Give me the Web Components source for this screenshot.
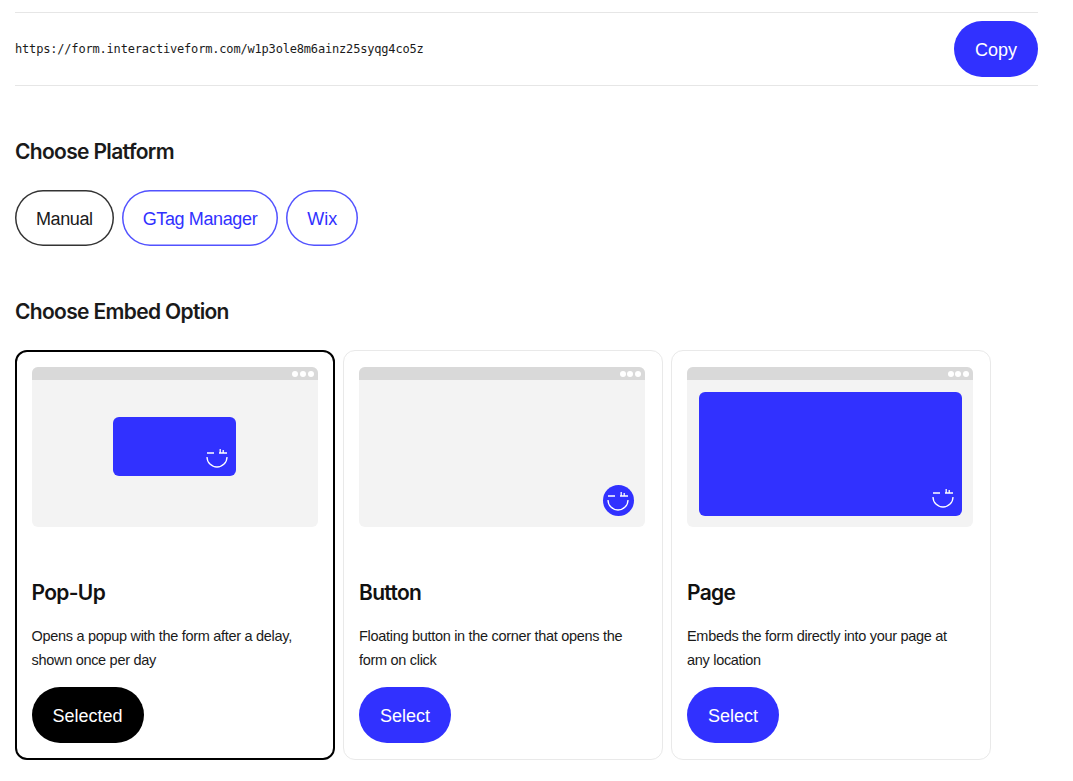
<!DOCTYPE html>
<html>
<head>
<meta charset="utf-8">
<title>Embed</title>
<style>
  body {
    margin: 0;
    background: #fff;
    font-family: "Liberation Sans", Arial, sans-serif;
    color: #1a1a1a;
  }
</style>
</head>
<body>
<embed-page></embed-page>

<script>
const pillTemplate = document.createElement('template');
pillTemplate.innerHTML = `
  <style>
    :host {
      display: inline-flex;
      align-items: center;
      justify-content: center;
      box-sizing: border-box;
      height: 56px;
      padding: 2px 21px 0;
      border-radius: 28px;
      font-size: 18px;
      white-space: nowrap;
      background: #3131ff;
      color: #fff;
    }
    :host([kind="black"]) { background: #000; }
    :host([kind="outline"]) {
      background: #fff;
      color: #3131ff;
      box-shadow: inset 0 0 0 1.5px #5252ff;
    }
    :host([kind="outline-dark"]) {
      background: #fff;
      color: #1a1a1a;
      box-shadow: inset 0 0 0 1.5px #333;
    }
  </style>
  <slot></slot>
`;

class EmbedPill extends HTMLElement {
  constructor() {
    super();
    this.attachShadow({ mode: 'open' });
    this.shadowRoot.appendChild(pillTemplate.content.cloneNode(true));
  }
}

const smileTemplate = document.createElement('template');
smileTemplate.innerHTML = `
  <style>
    :host { display: block; width: 22px; height: 20px; }
    svg { display: block; }
  </style>
  <svg width="22" height="20" viewBox="0 0 22 20" fill="none" stroke="#fff" stroke-width="1.3">
    <path d="M1 5H8"/>
    <path d="M13 5H21M14.2 1V5M17.2 2V5"/>
    <path d="M1 9A10 10 0 0 0 21 9"/>
  </svg>
`;

class EmbedSmile extends HTMLElement {
  constructor() {
    super();
    this.attachShadow({ mode: 'open' });
    this.shadowRoot.appendChild(smileTemplate.content.cloneNode(true));
  }
}

const previewTemplate = document.createElement('template');
previewTemplate.innerHTML = `
  <style>
    :host {
      display: block;
      position: relative;
      width: 286px;
      height: 160px;
      border-radius: 6px;
      overflow: hidden;
      background: #f3f3f3;
    }
    .bar {
      position: absolute;
      left: 0;
      right: 0;
      top: 0;
      height: 13px;
      background: #d9d9d9;
      display: flex;
      justify-content: flex-end;
      align-items: center;
      gap: 1.6px;
      padding-right: 4px;
    }
    .bar i {
      width: 6px;
      height: 6px;
      border-radius: 50%;
      background: #fff;
    }
    .stage {
      box-sizing: border-box;
      height: 100%;
      display: flex;
    }
    .blue {
      background: #3131ff;
      display: flex;
      align-items: flex-end;
      justify-content: flex-end;
      box-sizing: border-box;
    }
    :host([mode="popup"]) .stage {
      align-items: center;
      justify-content: center;
      padding-bottom: 1px;
    }
    :host([mode="popup"]) .blue {
      width: 123px;
      height: 59px;
      border-radius: 6px;
      padding: 0 8px 8px 0;
    }
    :host([mode="button"]) .stage {
      align-items: flex-end;
      justify-content: flex-end;
      padding: 0 11px 11px 0;
    }
    :host([mode="button"]) .blue {
      width: 31px;
      height: 31px;
      border-radius: 50%;
      padding: 0 5px 5px 0;
    }
    :host([mode="page"]) .stage { padding: 25px 11px 11px 12px; }
    :host([mode="page"]) .blue {
      flex: 1;
      border-radius: 6px;
      padding: 0 8px 8px 0;
    }
  </style>
  <div class="stage">
    <div class="blue"><embed-smile></embed-smile></div>
  </div>
  <div class="bar"><i></i><i></i><i></i></div>
`;

class EmbedPreview extends HTMLElement {
  constructor() {
    super();
    this.attachShadow({ mode: 'open' });
    this.shadowRoot.appendChild(previewTemplate.content.cloneNode(true));
  }
}

const cardTemplate = document.createElement('template');
cardTemplate.innerHTML = `
  <style>
    :host {
      display: block;
      box-sizing: border-box;
      width: 320px;
      height: 410px;
      padding: 16px 15px 0;
      border: 1px solid #e9e9e9;
      border-radius: 12px;
      background: #fff;
    }
    :host([selected]) {
      padding: 15px 14px 0 14.5px;
      border: 2px solid #000;
    }
    h3 {
      margin: 50px 0 0;
      font-family: Inter, "Liberation Sans", sans-serif;
      font-size: 21px;
      line-height: 32px;
      font-weight: 600;
      letter-spacing: -0.67px;
      color: #111;
    }
    p {
      margin: 15px 0 0;
      max-width: 280px;
      height: 48px;
      font-size: 14.5px;
      line-height: 24px;
      letter-spacing: -0.3px;
      color: #1a1a1a;
    }
    .action { margin-top: 15px; }
  </style>
  <slot name="preview"></slot>
  <h3><slot name="title"></slot></h3>
  <p><slot name="text"></slot></p>
  <div class="action"><slot name="action"></slot></div>
`;

class EmbedCard extends HTMLElement {
  constructor() {
    super();
    this.attachShadow({ mode: 'open' });
    this.shadowRoot.appendChild(cardTemplate.content.cloneNode(true));
  }
}

const pageTemplate = document.createElement('template');
pageTemplate.innerHTML = `
  <style>
    :host {
      display: block;
      box-sizing: border-box;
      width: 1073px;
      padding: 12px 35px 0 15px;
    }
    .link {
      display: flex;
      align-items: center;
      justify-content: space-between;
      height: 74px;
      box-sizing: border-box;
      border-top: 1px solid #e6e6e6;
      border-bottom: 1px solid #e6e6e6;
    }
    code {
      font-family: "DejaVu Sans Mono", monospace;
      font-size: 12px;
      letter-spacing: -0.18px;
      color: #1a1a1a;
    }
    h2 {
      margin: 0;
      font-family: Inter, "Liberation Sans", sans-serif;
      font-size: 21px;
      line-height: 32px;
      font-weight: 600;
      letter-spacing: -0.67px;
      color: #1a1a1a;
    }
    .h-platform { margin-top: 50px; }
    .h-embed { margin-top: 50px; }
    .platforms { display: flex; gap: 8px; margin-top: 22px; }
    .cards { display: flex; gap: 8px; margin-top: 22px; }
  </style>
  <div class="link">
    <code>https://form.interactiveform.com/w1p3ole8m6ainz25syqg4co5z</code>
    <embed-pill>Copy</embed-pill>
  </div>
  <h2 class="h-platform">Choose Platform</h2>
  <div class="platforms">
    <embed-pill kind="outline-dark" style="letter-spacing:-.4px">Manual</embed-pill>
    <embed-pill kind="outline" style="letter-spacing:-.37px">GTag Manager</embed-pill>
    <embed-pill kind="outline">Wix</embed-pill>
  </div>
  <h2 class="h-embed">Choose Embed Option</h2>
  <div class="cards">
    <embed-card selected>
      <embed-preview slot="preview" mode="popup"></embed-preview>
      <span slot="title">Pop-Up</span>
      <span slot="text">Opens a popup with the form after a delay, shown once per day</span>
      <embed-pill slot="action" kind="black">Selected</embed-pill>
    </embed-card>
    <embed-card>
      <embed-preview slot="preview" mode="button"></embed-preview>
      <span slot="title">Button</span>
      <span slot="text">Floating button in the corner that opens the form on click</span>
      <embed-pill slot="action">Select</embed-pill>
    </embed-card>
    <embed-card>
      <embed-preview slot="preview" mode="page"></embed-preview>
      <span slot="title">Page</span>
      <span slot="text">Embeds the form directly into your page at any location</span>
      <embed-pill slot="action">Select</embed-pill>
    </embed-card>
  </div>
`;

class EmbedPage extends HTMLElement {
  constructor() {
    super();
    this.attachShadow({ mode: 'open' });
    this.shadowRoot.appendChild(pageTemplate.content.cloneNode(true));
  }
}

window.customElements.define('embed-pill', EmbedPill);
window.customElements.define('embed-smile', EmbedSmile);
window.customElements.define('embed-preview', EmbedPreview);
window.customElements.define('embed-card', EmbedCard);
window.customElements.define('embed-page', EmbedPage);
</script>
</body>
</html>
